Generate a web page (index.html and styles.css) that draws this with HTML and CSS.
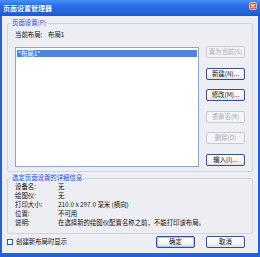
FILE: index.html
```html
<!DOCTYPE html>
<html>
<head>
<meta charset="utf-8">
<title>页面设置管理器</title>
<link rel="stylesheet" href="styles.css">
</head>
<body>
<div class="window">
  <div class="titlebar">
    <span class="title">页面设置管理器</span>
    <svg class="close" viewBox="0 0 8 8" width="8" height="8">
      <rect x="0.5" y="0.5" width="7" height="7" rx="1.2" fill="#e0532f" stroke="#f3d2c4" stroke-width="0.8"/>
      <path d="M2.3 2.3 L5.7 5.7 M5.7 2.3 L2.3 5.7" stroke="#fff" stroke-width="1.1" stroke-linecap="round"/>
    </svg>
  </div>
  <div class="client">
    <fieldset class="group g1">
      <legend>页面设置(P)</legend>
      <div class="current"><span class="cur-label">当前布局:</span><span>布局1</span></div>
      <div class="main-row">
        <div class="listbox">
          <div class="item sel">*布局1*</div>
        </div>
        <div class="btncol">
          <button class="btn" disabled>置为当前(S)</button>
          <button class="btn">新建(N)...</button>
          <button class="btn">修改(M)...</button>
          <button class="btn" disabled>重命名(R)</button>
          <button class="btn" disabled>删除(D)</button>
          <button class="btn">输入(I)...</button>
        </div>
      </div>
    </fieldset>
    <fieldset class="group g2">
      <legend>选定页面设置的详细信息</legend>
      <div class="details">
        <span>设备名:</span><span>无</span>
        <span>绘图仪:</span><span>无</span>
        <span>打印大小:</span><span>210.0 x 297.0 毫米 (横向)</span>
        <span>位置:</span><span>不可用</span>
        <span>说明:</span><span>在选择新的绘图仪配置名称之前，不能打印该布局。</span>
      </div>
    </fieldset>
    <div class="footer">
      <label class="chk"><span class="box"></span>创建新布局时显示</label>
      <div class="actions">
        <button class="btn default">确定</button>
        <button class="btn">取消</button>
      </div>
    </div>
  </div>
</div>
</body>
</html>
```
FILE: styles.css
```css
* { box-sizing: border-box; }
html, body { margin: 0; padding: 0; }
body {
  width: 260px;
  height: 257px;
  overflow: hidden;
  font-family: "Noto Sans CJK SC", "Noto Sans", sans-serif;
  font-size: 6.4px;
  color: #111;
}
.window {
  width: 260px;
  height: 257px;
  background: #2462da;
  display: flex;
  flex-direction: column;
}
.titlebar {
  flex: none;
  height: 16px;
  position: relative;
  display: flex;
  align-items: center;
  padding-left: 3px;
  background: linear-gradient(#4a90f6, #2a6ee6 35%, #2262dd 80%, #1b58d2);
}
.title {
  color: #fff;
  font-weight: bold;
  font-size: 7px;
  line-height: 8px;
  text-shadow: 0 0 1px #0b3a9e;
}
.close {
  position: absolute;
  right: 3px;
  top: 2px;
}
.client {
  flex: 1;
  margin: 0 2px 4px;
  background: #eceef3;
  display: flex;
  flex-direction: column;
}
.group {
  margin: 0 5px;
  border: 1px solid #d0d4db;
  border-radius: 2px;
  min-width: 0;
}
.group legend {
  padding: 0 1px;
  margin-left: -4px;
  color: #1b4fd6;
  line-height: 8px;
}
.g1 {
  margin-top: 3px;
  padding: 4px 7px 4px 7px;
}
.current {
  line-height: 8px;
  height: 8px;
  display: flex;
}
.cur-label { width: 33px; }
.main-row {
  margin-top: 8px;
  display: flex;
  gap: 7px;
}
.listbox {
  width: 184px;
  height: 120px;
  background: #fff;
  border: 1px solid #8ea6c6;
  padding: 2px 1px;
}
.item {
  height: 7px;
  line-height: 7px;
  padding-left: 1px;
}
.item.sel {
  background: #4f84dc;
  color: #fff;
}
.btncol {
  width: 39px;
  height: 120px;
  margin-top: -1px;
  display: flex;
  flex-direction: column;
  justify-content: space-between;
}
.btn {
  width: 39px;
  height: 12px;
  padding: 0;
  font-family: inherit;
  font-size: 6.4px;
  line-height: 10px;
  color: #111;
  border: 1px solid #34508c;
  border-radius: 2px;
  background: linear-gradient(#ffffff, #f4f4f2 60%, #dfe2ea);
  text-align: center;
  white-space: nowrap;
}
.btn:disabled {
  color: #a8adb8;
  border-color: #c5cad4;
  background: #f3f4f6;
}
.btn.default {
  box-shadow: inset 0 0 0 1px #a9c3ee;
}
.g2 {
  margin-top: 2px;
  padding: 0 7px 6px 7px;
}
.details {
  display: grid;
  grid-template-columns: 43px 1fr;
  line-height: 9px;
  white-space: nowrap;
}
.footer {
  margin-top: 2px;
  height: 12px;
  display: flex;
  align-items: center;
  justify-content: space-between;
  padding: 0 13px 0 5px;
}
.chk {
  display: flex;
  align-items: center;
  gap: 3px;
  line-height: 8px;
}
.box {
  width: 6px;
  height: 6px;
  border: 1px solid #2a5a8f;
  background: #fff;
}
.actions {
  display: flex;
  gap: 11px;
}
```
